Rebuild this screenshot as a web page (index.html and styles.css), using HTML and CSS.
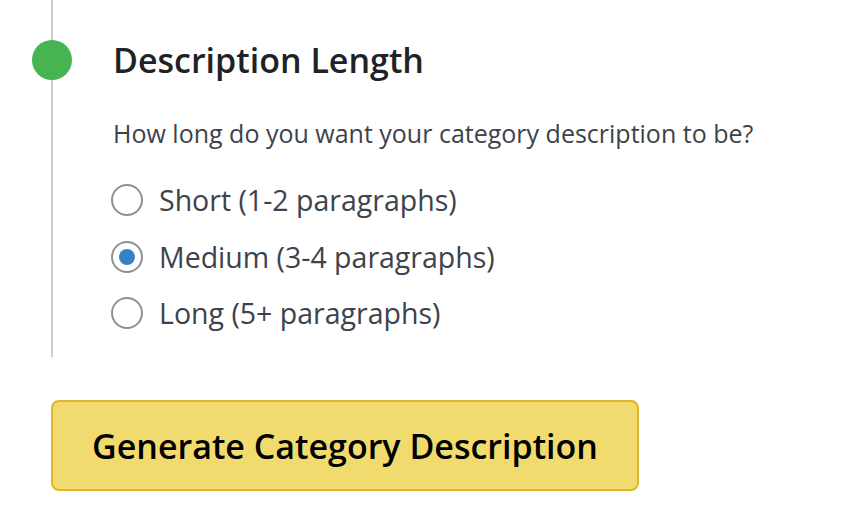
FILE: index.html
```html
<!DOCTYPE html>
<html lang="en">
<head>
    <meta charset="UTF-8">
    <meta name="viewport" content="width=device-width, initial-scale=1.0">
    <title>Category Description</title>
    <link rel="stylesheet" href="styles.css">
</head>
<body>
    <div class="wizard">
        <div class="step">
            <span class="step-dot"></span>
            <h2>Description Length</h2>
            <p class="hint">How long do you want your category description to be?</p>
            <div class="options">
                <label class="option"><input type="radio" name="length" value="short"> Short (1-2 paragraphs)</label>
                <label class="option"><input type="radio" name="length" value="medium" checked> Medium (3-4 paragraphs)</label>
                <label class="option"><input type="radio" name="length" value="long"> Long (5+ paragraphs)</label>
            </div>
        </div>

        <button class="generate">Generate Category Description</button>
    </div>
</body>
</html>
```

FILE: styles.css
```css
body {
    font-family: "Open Sans", "Noto Sans", sans-serif;
    margin: 0;
    background: #fff;
    color: #3c434a;
}
.wizard {
    padding-left: 51px;
}
.step {
    position: relative;
    border-left: 2px solid #cccccc;
    padding: 40px 0 22px 60px;
}
.step-dot {
    position: absolute;
    left: -21px;
    top: 40px;
    width: 40px;
    height: 40px;
    border-radius: 50%;
    background: #46b450;
}
h2 {
    margin: 0;
    font-size: 34px;
    font-weight: 600;
    line-height: 40px;
    color: #1d2327;
}
.hint {
    margin: 36px 0 28px;
    font-size: 25px;
    line-height: 34px;
}
.options {
    display: flex;
    flex-direction: column;
    gap: 12.5px;
}
.option {
    display: flex;
    align-items: center;
    gap: 16px;
    font-size: 28.5px;
    line-height: 44px;
    margin-left: -2px;
}
.option input {
    appearance: none;
    margin: 0;
    width: 32px;
    height: 32px;
    border: 2px solid #8c8f94;
    border-radius: 50%;
    background: #fff;
    display: grid;
    place-content: center;
}
.option input:checked::before {
    content: "";
    width: 16px;
    height: 16px;
    border-radius: 50%;
    background: #3582c4;
}
.generate {
    margin-top: 43px;
    width: 588px;
    height: 91px;
    background: #f2db6e;
    border: 2px solid #dbb72a;
    border-radius: 8px;
    font-family: inherit;
    font-size: 34px;
    font-weight: 600;
    color: #000;
    cursor: pointer;
}
```
